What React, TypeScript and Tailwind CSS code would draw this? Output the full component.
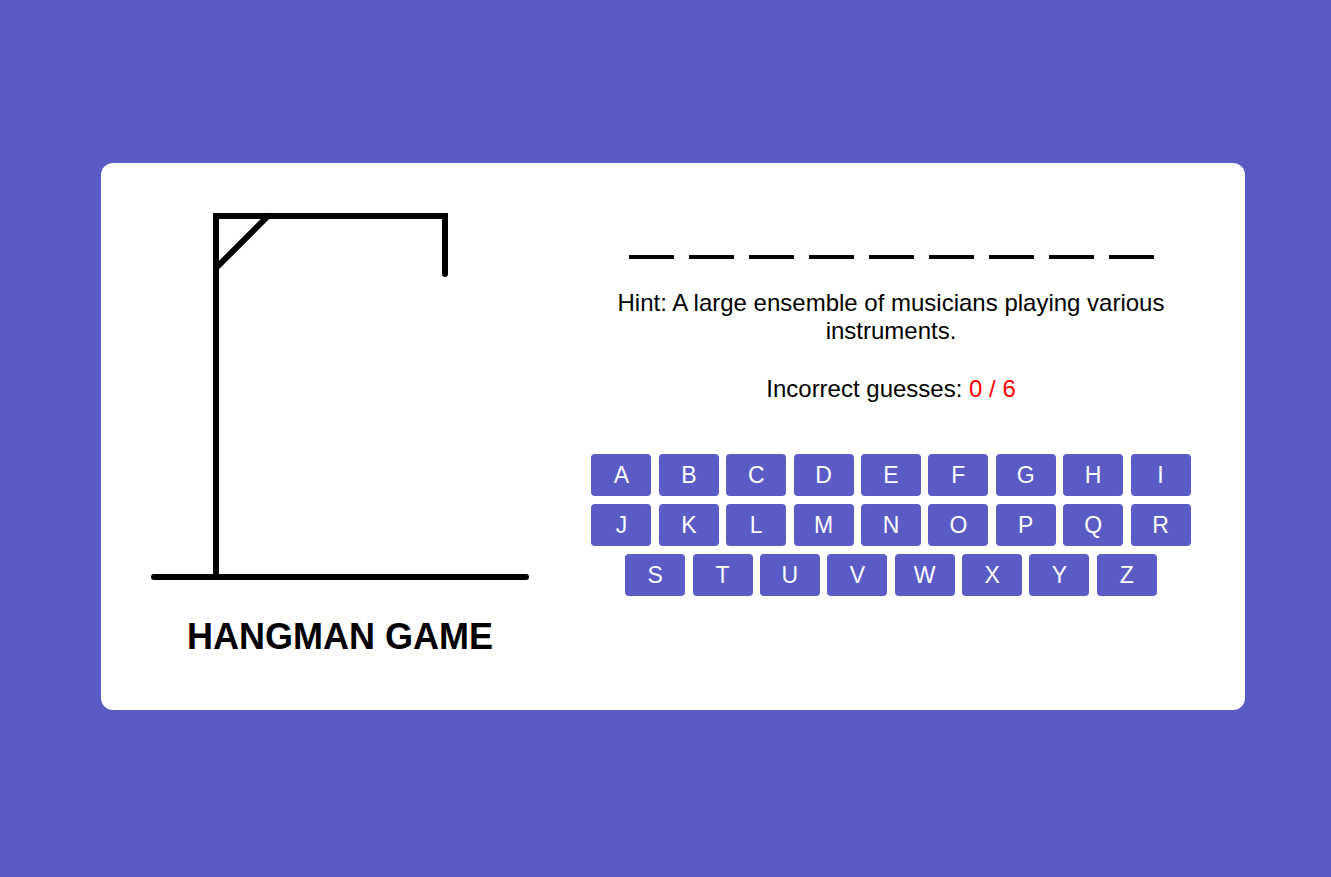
const LETTERS = "ABCDEFGHIJKLMNOPQRSTUVWXYZ".split("");
const WORD_LENGTH = 9;

function Gallows() {
  return (
    <svg width="380" height="372" viewBox="0 0 380 372" fill="none" className="block">
      <line x1="4" y1="367" x2="376" y2="367" stroke="black" strokeWidth="6" strokeLinecap="round" />
      <polyline
        points="66,367 66,6 295,6 295,64"
        stroke="black"
        strokeWidth="6"
        strokeLinecap="round"
        strokeLinejoin="miter"
      />
      <line x1="66" y1="58" x2="118" y2="6" stroke="black" strokeWidth="6" strokeLinecap="round" />
    </svg>
  );
}

export default function App() {
  return (
    <div
      className="flex min-h-[877px] items-start justify-center bg-[#5b5bc6] pl-[15px] pt-[163px]"
      style={{ fontFamily: '"Liberation Sans", Arial, sans-serif' }}
    >
      <div className="flex h-[547px] w-[1144px] rounded-[12px] bg-white pl-[49px] pt-[47px]">
        <div className="flex w-[380px] flex-col items-center">
          <Gallows />
          <h1 className="mt-[33px] text-[36px] font-bold leading-[44px] text-black">HANGMAN GAME</h1>
        </div>

        <div className="ml-[61px] flex w-[600px] flex-col items-center pt-[45px]">
          <ul className="flex gap-[15px]">
            {Array.from({ length: WORD_LENGTH }).map((_, i) => (
              <li key={i} className="h-[4px] w-[45px] bg-black" />
            ))}
          </ul>
          <p className="mt-[30px] w-[600px] text-center text-[24px] leading-[28px] text-black">
            Hint: A large ensemble of musicians playing various instruments.
          </p>
          <p className="mt-[30px] text-center text-[24px] leading-[28px] text-black">
            Incorrect guesses: <span className="text-[#ff0000]">0 / 6</span>
          </p>
          <div className="mt-[51px] flex w-[600px] flex-wrap justify-center gap-x-[7.4px] gap-y-[8px]">
            {LETTERS.map((l) => (
              <button
                key={l}
                type="button"
                className="h-[42px] w-[60px] rounded-[4px] bg-[#5b5bc6] text-[23px] text-white"
              >
                {l}
              </button>
            ))}
          </div>
        </div>
      </div>
    </div>
  );
}
